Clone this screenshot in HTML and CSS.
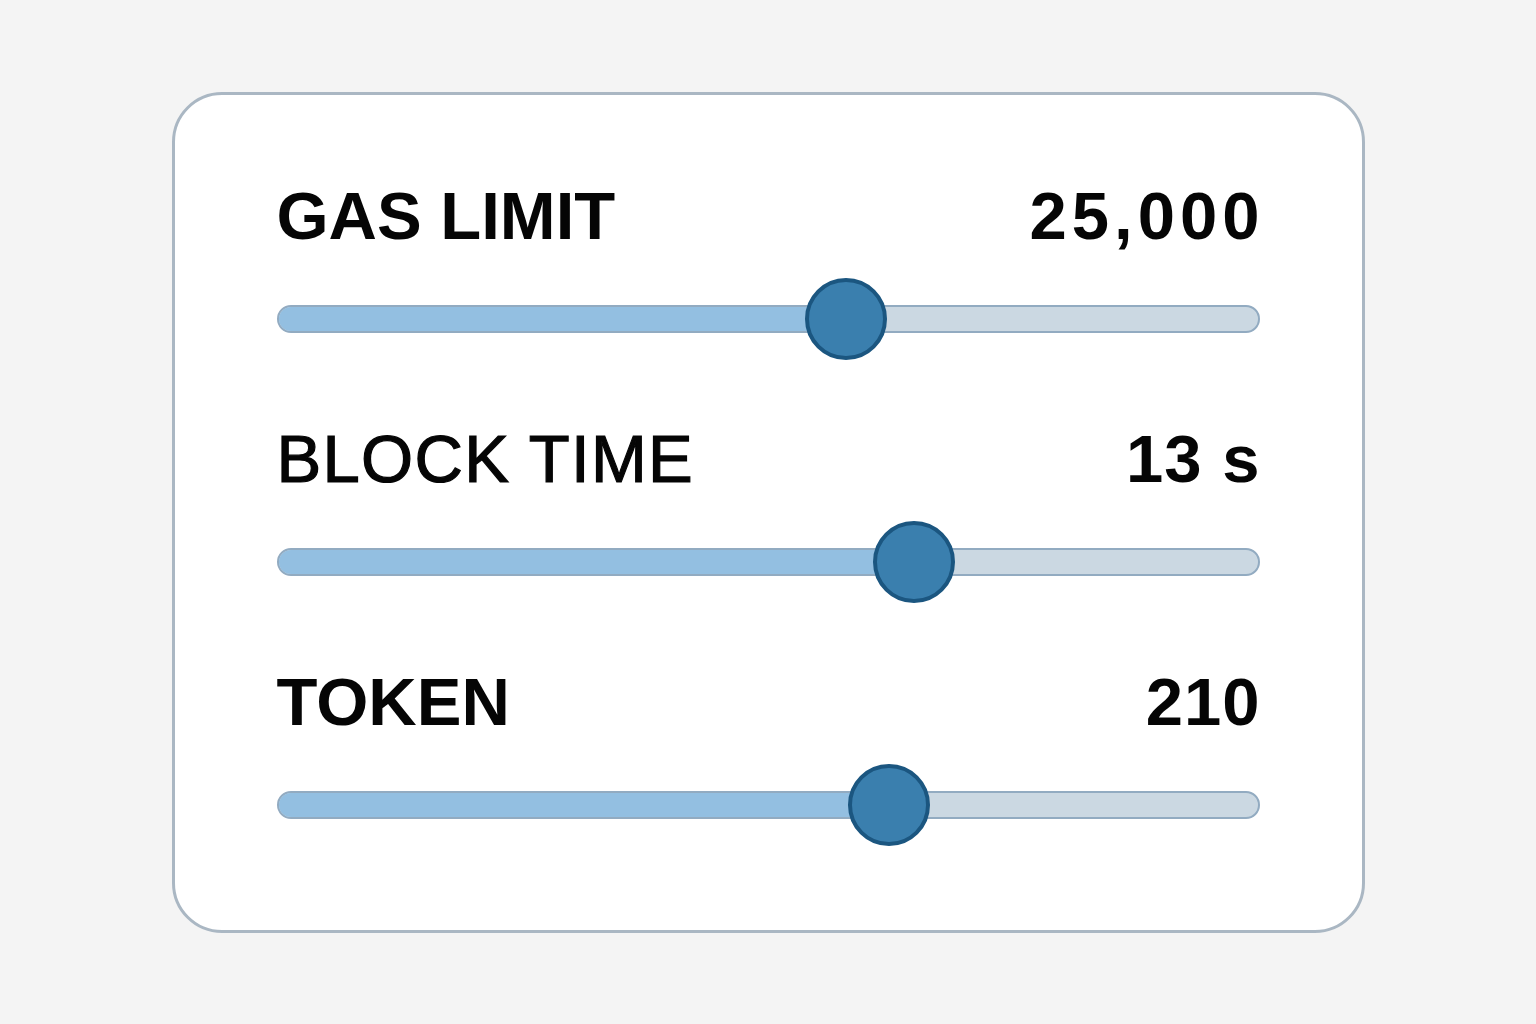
FILE: index.html
```html
<!DOCTYPE html>
<html lang="en">
<head>
<meta charset="utf-8">
<title>Chain settings</title>
<link rel="stylesheet" href="styles.css">
</head>
<body>
<main class="card">
  <section class="setting">
    <div class="head">
      <span class="label bold">GAS LIMIT</span>
      <span class="value wide">25,000</span>
    </div>
    <div class="slider">
      <div class="track">
        <div class="fill" style="width:57.9%"></div>
      </div>
      <div class="thumb" style="left:57.9%"></div>
    </div>
  </section>
  <section class="setting">
    <div class="head">
      <span class="label medium">BLOCK TIME</span>
      <span class="value">13 s</span>
    </div>
    <div class="slider">
      <div class="track">
        <div class="fill" style="width:64.9%"></div>
      </div>
      <div class="thumb" style="left:64.9%"></div>
    </div>
  </section>
  <section class="setting">
    <div class="head">
      <span class="label bold">TOKEN</span>
      <span class="value">210</span>
    </div>
    <div class="slider">
      <div class="track">
        <div class="fill" style="width:62.3%"></div>
      </div>
      <div class="thumb" style="left:62.3%"></div>
    </div>
  </section>
</main>
</body>
</html>
```
FILE: styles.css
```css
html, body {
  margin: 0;
  padding: 0;
}
body {
  background: #f4f4f4;
  height: 100vh;
  display: flex;
  align-items: center;
  justify-content: center;
  font-family: "Liberation Sans", Arial, sans-serif;
  color: #050505;
}
.card {
  box-sizing: border-box;
  width: 1193px;
  height: 841px;
  background: #ffffff;
  border: 3.5px solid #aab7c3;
  border-radius: 50px;
  padding: 86px 102px 84px 102px;
  display: flex;
  flex-direction: column;
  gap: 64px;
}
.setting {
  display: flex;
  flex-direction: column;
  gap: 27px;
}
.head {
  display: flex;
  justify-content: space-between;
  align-items: baseline;
  height: 70px;
  line-height: 70px;
  font-size: 67px;
}
.label.bold {
  font-weight: 700;
}
.label.medium {
  font-weight: 400;
  -webkit-text-stroke: 1.2px #050505;
  letter-spacing: 1.3px;
}
.value {
  font-weight: 700;
  letter-spacing: 1px;
  margin-right: -1px;
}
.value.wide {
  letter-spacing: 5px;
  margin-right: -5px;
}
.slider {
  position: relative;
  height: 82px;
  display: flex;
  align-items: center;
}
.track {
  box-sizing: border-box;
  width: 100%;
  height: 28px;
  border-radius: 14px;
  background: #cbd8e2;
  border: 2.5px solid #92abc1;
  overflow: hidden;
  display: flex;
}
.fill {
  height: 100%;
  background: #93bfe1;
}
.thumb {
  position: absolute;
  top: 0;
  box-sizing: border-box;
  width: 82px;
  height: 82px;
  margin-left: -41px;
  border-radius: 50%;
  background: #3a7fae;
  border: 4px solid #1b5680;
}
```
